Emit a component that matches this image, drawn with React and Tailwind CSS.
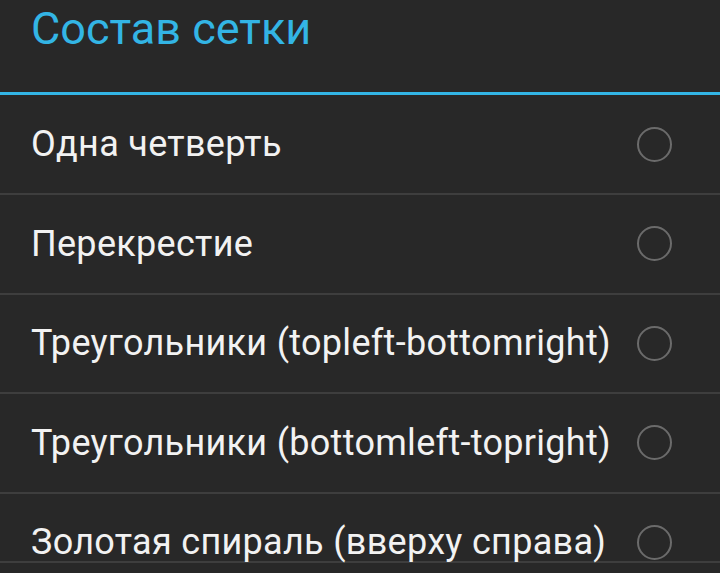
const OPTIONS = [
  "Одна четверть",
  "Перекрестие",
  "Треугольники (topleft-bottomright)",
  "Треугольники (bottomleft-topright)",
  "Золотая спираль (вверху справа)",
];

function Radio() {
  return (
    <span className="relative h-[35px] w-[35px] shrink-0 rounded-full border-2 border-[#6b6b6b]" />
  );
}

export default function App() {
  return (
    <div className="h-[573px] w-[720px] overflow-hidden bg-[#282828] font-['Roboto',sans-serif]">
      {/* Dialog title */}
      <div className="flex h-[92px] items-start pl-[31px] pt-[2px]">
        <h1 className="text-[45px] leading-[54px] text-[#33b5e5]">Состав сетки</h1>
      </div>
      <div className="h-[3px] bg-[#33b5e5]" />

      {/* Options list */}
      <div className="flex flex-col">
        {OPTIONS.map((label, i) => (
          <div key={label}>
            {i > 0 && <div className="h-[2px] bg-[#3e3e3e]" />}
            <div
              className={
                i === 0
                  ? "flex h-[98px] items-center justify-between pl-[31px] pr-[48px]"
                  : "relative flex h-[97.5px] items-center justify-between pl-[31px] pr-[48px]"
              }
            >
              {/* stray divider seen at the bottom edge of the last item */}
              {i === OPTIONS.length - 1 && (
                <div className="absolute inset-x-0 top-[67px] h-[2px] bg-[#3e3e3e]" />
              )}
              <span className="relative text-[36px] leading-none tracking-[0.3px] text-[#f2f2f2]">
                {label}
              </span>
              <Radio />
            </div>
          </div>
        ))}
      </div>
    </div>
  );
}
